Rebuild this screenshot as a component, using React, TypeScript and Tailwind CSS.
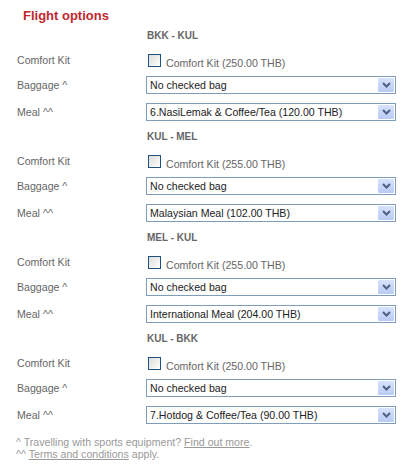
const segments = [
  { route: 'BKK - KUL', kit: 'Comfort Kit (250.00 THB)', meal: '6.NasiLemak & Coffee/Tea (120.00 THB)' },
  { route: 'KUL - MEL', kit: 'Comfort Kit (255.00 THB)', meal: 'Malaysian Meal (102.00 THB)' },
  { route: 'MEL - KUL', kit: 'Comfort Kit (255.00 THB)', meal: 'International Meal (204.00 THB)' },
  { route: 'KUL - BKK', kit: 'Comfort Kit (250.00 THB)', meal: '7.Hotdog & Coffee/Tea (90.00 THB)' },
];

const FakeSelect = ({ value }: { value: string }) => (
  <div className="flex h-[18px] w-[250px] items-stretch border border-[#7f9db9] bg-white">
    <span className="flex-1 self-center pl-[3px] leading-[12px] text-[#222] whitespace-nowrap overflow-hidden">{value}</span>
    <span className="m-px flex w-[16px] items-center justify-center rounded-[1px] bg-linear-to-b from-[#d8e3fc] to-[#b9cbf5]">
      <svg width="9" height="6" viewBox="0 0 9 6">
        <polyline points="1,1 4.5,4.5 8,1" fill="none" stroke="#4d6185" strokeWidth="2" />
      </svg>
    </span>
  </div>
);

const Row = ({ label, className, children }: { label: string; className: string; children: React.ReactNode }) => (
  <div className={`flex pl-[17px] ${className}`}>
    <div className="w-[129px] self-center leading-[12px] text-[#666]">{label}</div>
    {children}
  </div>
);

export default function App() {
  return (
    <div className="h-[465px] w-[411px] bg-white font-['Liberation_Sans',Arial,sans-serif] text-[10.6px]">
      <div className="h-[24px] pl-[23px] pt-[9px] text-[13px] font-bold leading-[13px] text-[#c1272d]">Flight options</div>
      {segments.map((seg) => (
        <div key={seg.route + seg.meal}>
          <div className="flex h-[23px] items-center pl-[147px] text-[10px] font-bold leading-[12px] text-[#666]">{seg.route}</div>
          <Row label="Comfort Kit" className="h-[25px]">
            <div className="flex items-start pl-[2px]">
              <span className="mt-[7px] h-[13px] w-[13px] border border-[#1c5180] bg-linear-to-br from-[#dcdcd7] to-white" />
              <span className="ml-[5px] mt-[10px] leading-[12px] text-[#666]">{seg.kit}</span>
            </div>
          </Row>
          <Row label="Baggage ^" className="h-[26px] items-center">
            <FakeSelect value="No checked bag" />
          </Row>
          <Row label="Meal ^^" className="h-[27px] items-center">
            <FakeSelect value={seg.meal} />
          </Row>
        </div>
      ))}
      <div className="mt-[8px] pl-[16px] leading-[12px] text-[#999]">
        <div>
          ^ Travelling with sports equipment? <span className="underline">Find out more</span>.
        </div>
        <div>
          ^^ <span className="underline">Terms and conditions</span> apply.
        </div>
      </div>
    </div>
  );
}
